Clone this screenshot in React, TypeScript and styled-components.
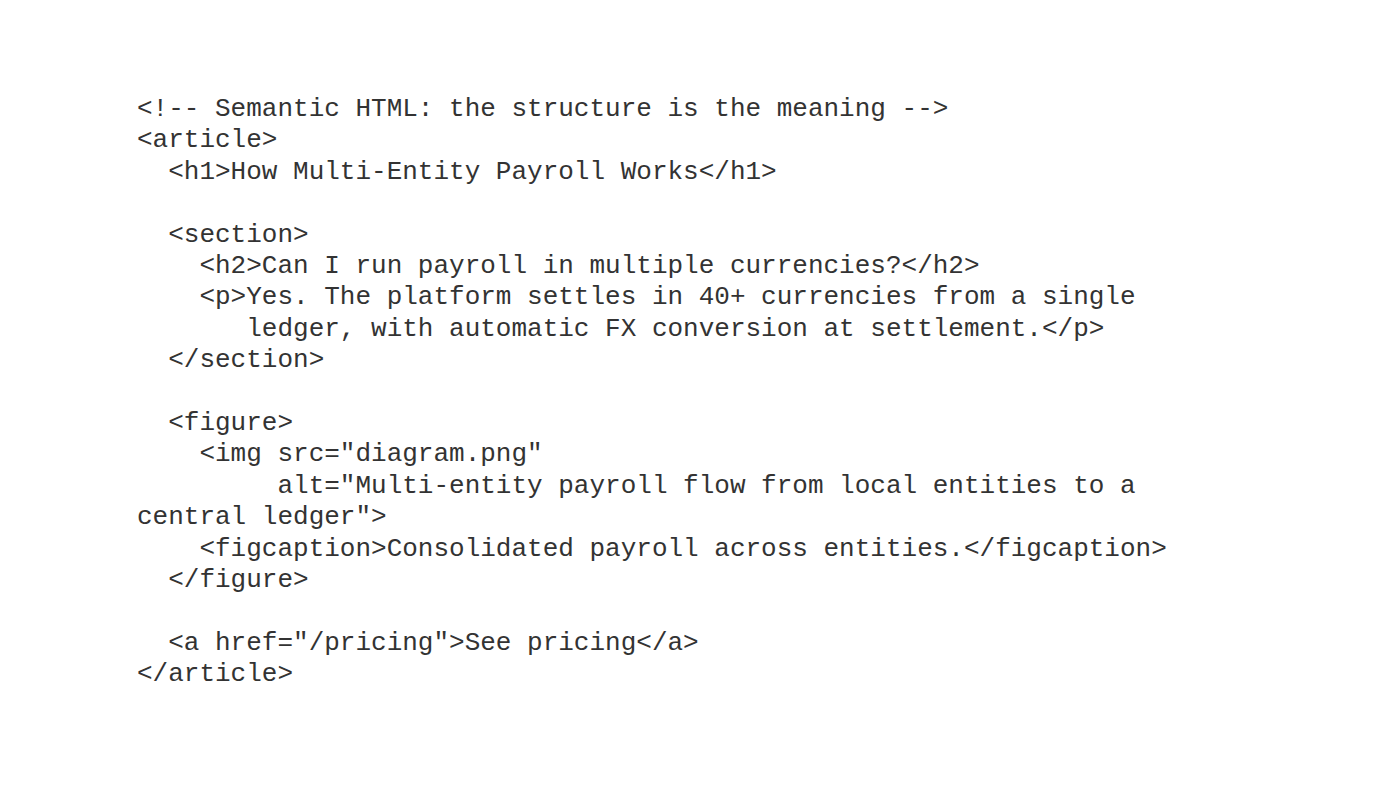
import React from "react";
import styled, { createGlobalStyle } from "styled-components";

const Global = createGlobalStyle`
  html, body { margin: 0; padding: 0; background: #ffffff; }
  body { width: 1400px; height: 787px; overflow: hidden; }
`;

const Page = styled.main`
  width: 1400px;
  height: 787px;
  box-sizing: border-box;
  padding: 94px 0 0 137px;
  background: #ffffff;
`;

const Code = styled.pre`
  margin: 0;
  font-family: "Liberation Mono", "Courier New", monospace;
  font-size: 26px;
  line-height: 31.4px;
  color: #333333;
  white-space: pre;
`;

const source = `<!-- Semantic HTML: the structure is the meaning -->
<article>
  <h1>How Multi-Entity Payroll Works</h1>

  <section>
    <h2>Can I run payroll in multiple currencies?</h2>
    <p>Yes. The platform settles in 40+ currencies from a single
       ledger, with automatic FX conversion at settlement.</p>
  </section>

  <figure>
    <img src="diagram.png"
         alt="Multi-entity payroll flow from local entities to a
central ledger">
    <figcaption>Consolidated payroll across entities.</figcaption>
  </figure>

  <a href="/pricing">See pricing</a>
</article>`;

export default function App() {
  return (
    <>
      <Global />
      <Page>
        <Code>{source}</Code>
      </Page>
    </>
  );
}
